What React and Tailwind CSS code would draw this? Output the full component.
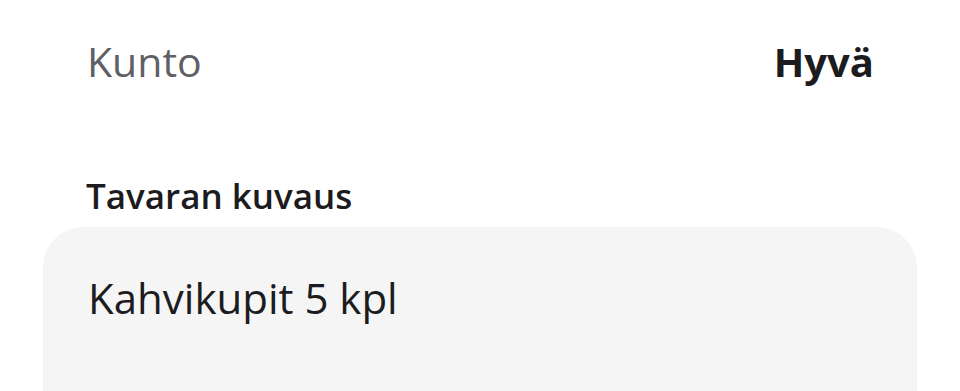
export default function App() {
  return (
    <div className="w-[960px] h-[391px] overflow-hidden bg-white px-[43px]" style={{ fontFamily: '"Open Sans", "Noto Sans", sans-serif' }}>
      <div className="flex items-center justify-between pl-[44px] pr-[43px] h-[124px]">
        <span className="text-[41px] text-[#5f6066]">Kunto</span>
        <span className="text-[40px] font-bold text-[#1c1c20]">Hyvä</span>
      </div>
      <div className="px-[43px] pt-[49px] pb-[9px]">
        <h3 className="text-[35px] font-semibold text-[#1c1c20] leading-[45px]">Tavaran kuvaus</h3>
      </div>
      <div className="rounded-[40px] bg-[#f5f5f5] h-[240px] px-[45px] pt-[43px]">
        <p className="text-[42px] text-[#1c1c20] leading-[56px]">Kahvikupit 5 kpl</p>
      </div>
    </div>
  );
}
